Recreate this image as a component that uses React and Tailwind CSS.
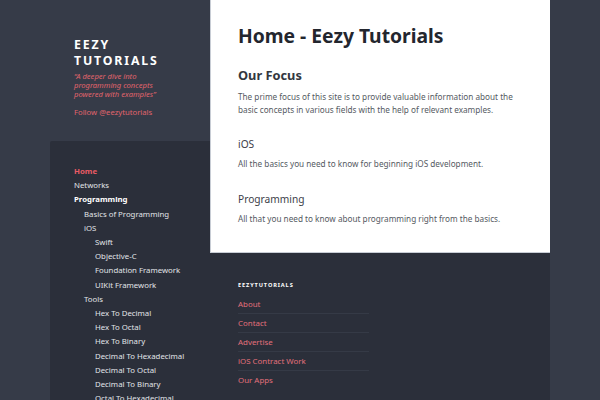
import React from "react";

const nav = [
  { t: "Home", l: 0, k: "home" },
  { t: "Networks", l: 0 },
  { t: "Programming", l: 0, k: "bold" },
  { t: "Basics of Programming", l: 1 },
  { t: "iOS", l: 1 },
  { t: "Swift", l: 2 },
  { t: "Objective-C", l: 2 },
  { t: "Foundation Framework", l: 2 },
  { t: "UIKit Framework", l: 2 },
  { t: "Tools", l: 1 },
  { t: "Hex To Decimal", l: 2 },
  { t: "Hex To Octal", l: 2 },
  { t: "Hex To Binary", l: 2 },
  { t: "Decimal To Hexadecimal", l: 2 },
  { t: "Decimal To Octal", l: 2 },
  { t: "Decimal To Binary", l: 2 },
  { t: "Octal To Hexadecimal", l: 2 },
];

const indent = ["pl-0", "pl-[10px]", "pl-[21px]"];

const links = ["About", "Contact", "Advertise", "iOS Contract Work", "Our Apps"];

export default function App() {
  return (
    <div
      className="w-[600px] h-[400px] overflow-hidden bg-[#363b48] flex"
      style={{ fontFamily: '"Noto Sans", "DejaVu Sans", sans-serif' }}
    >
      {/* Left column */}
      <div className="w-[210px] flex flex-col shrink-0">
        <header className="h-[141px] shrink-0 pl-[74px] pt-[37px]">
          <div className="text-white font-bold text-[12.3px] leading-[15.7px] tracking-[1.85px]">
            <div>EEZY</div>
            <div>TUTORIALS</div>
          </div>
          <div className="mt-[4px] text-[#e0646c] italic text-[7.6px] leading-[8.7px] whitespace-nowrap">
            <div>“A deeper dive into</div>
            <div>programming concepts</div>
            <div>powered with examples”</div>
          </div>
          <div className="mt-[7px] text-[#e0646c] text-[7.7px] leading-[12px]">
            Follow @eezytutorials
          </div>
        </header>
        <nav className="flex-1 ml-[50px] bg-[#2b2f3a] rounded-tl-[2px] pl-[24px] pt-[23px]">
          {nav.map((n) => (
            <div
              key={n.t}
              className={
                "text-[7.8px] leading-[14.2px] whitespace-nowrap " +
                indent[n.l] +
                " " +
                (n.k === "home"
                  ? "text-[#ea5b65] font-bold"
                  : n.k === "bold"
                  ? "text-white font-bold"
                  : "text-[#e1e4e8]")
              }
            >
              {n.t}
            </div>
          ))}
        </nav>
      </div>

      {/* Center column */}
      <div className="w-[340px] flex flex-col shrink-0">
        <main className="h-[253px] shrink-0 bg-white border-l border-b border-[#c8cdd5] pl-[27px] pr-[28px] pt-[24px]">
          <h1 className="text-[19.3px] leading-[24px] font-bold text-[#23262e]">
            Home - Eezy Tutorials
          </h1>
          <h2 className="mt-[19px] text-[12.8px] leading-[16px] font-bold text-[#333740]">
            Our Focus
          </h2>
          <p className="mt-[7px] text-[8.2px] leading-[13.4px] text-[#555a62]">
            The prime focus of this site is to provide valuable information about the basic
            concepts in various fields with the help of relevant examples.
          </p>
          <h3 className="mt-[20px] text-[10.2px] leading-[14px] text-[#3d4049]">iOS</h3>
          <p className="mt-[6.5px] text-[8.2px] leading-[13.4px] text-[#555a62]">
            All the basics you need to know for beginning iOS development.
          </p>
          <h3 className="mt-[21.3px] text-[10.2px] leading-[14px] text-[#3d4049]">
            Programming
          </h3>
          <p className="mt-[6.2px] text-[8.2px] leading-[13.4px] text-[#555a62]">
            All that you need to know about programming right from the basics.
          </p>
        </main>
        <footer className="flex-1 bg-[#2b2f3a] pl-[28px] pt-[27.7px]">
          <div className="text-white font-bold text-[5.6px] leading-[8px] tracking-[0.9px]">
            EEZYTUTORIALS
          </div>
          <ul className="mt-[6.3px] w-[131px]">
            {links.map((l, i) => (
              <li
                key={l}
                className={
                  "h-[19px] text-[7.9px] leading-[18px] text-[#e2707a] " +
                  (i < links.length - 1 ? "border-b border-[#353a46]" : "")
                }
              >
                {l}
              </li>
            ))}
          </ul>
        </footer>
      </div>

      <div className="flex-1" />
    </div>
  );
}
